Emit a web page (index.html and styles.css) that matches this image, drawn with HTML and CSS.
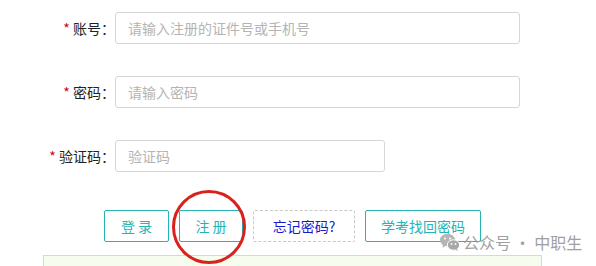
FILE: index.html
```html
<!DOCTYPE html>
<html lang="zh">
<head>
<meta charset="utf-8">
<link rel="stylesheet" href="styles.css">
</head>
<body>
<div class="page">
  <form class="form">
    <div class="row">
      <label class="label"><span class="star">*</span> 账号：</label>
      <input class="input wide" type="text" placeholder="请输入注册的证件号或手机号">
    </div>
    <div class="row">
      <label class="label"><span class="star">*</span> 密码：</label>
      <input class="input wide" type="password" placeholder="请输入密码">
    </div>
    <div class="row">
      <label class="label"><span class="star">*</span> 验证码：</label>
      <input class="input narrow" type="text" placeholder="验证码">
    </div>
    <div class="actions">
      <span class="btn">登 录</span>
      <span class="btn">注 册</span>
      <span class="btn dashed">忘记密码?</span>
      <span class="btn">学考找回密码</span>
    </div>
  </form>
  <div class="notice"></div>
  <div class="circle"></div>
  <div class="watermark">
    <svg class="wx" width="20" height="18" viewBox="0 0 20 18">
      <ellipse cx="7.5" cy="7" rx="7.5" ry="6.3" fill="#b5b5b5"/>
      <path d="M3 12 L2.5 15 L6 12.6 Z" fill="#b5b5b5"/>
      <ellipse cx="13.5" cy="12" rx="6.2" ry="5.2" fill="#a8a8a8" stroke="#fff" stroke-width="1"/>
      <path d="M17 16 L18 18 L15 16.5 Z" fill="#a8a8a8"/>
      <circle cx="5" cy="5.5" r="1" fill="#fff"/>
      <circle cx="10" cy="5.5" r="1" fill="#fff"/>
      <circle cx="11.5" cy="11" r="0.9" fill="#fff"/>
      <circle cx="15.5" cy="11" r="0.9" fill="#fff"/>
    </svg>
    <span>公众号 · 中职生</span>
  </div>
</div>
</body>
</html>
```
FILE: styles.css
```css
html, body {
  margin: 0;
  padding: 0;
  background: #fff;
}
body {
  font-family: "Microsoft YaHei", "Noto Sans CJK SC", sans-serif;
  font-size: 14px;
  color: #333;
}
.page {
  position: relative;
  width: 596px;
  height: 266px;
  overflow: hidden;
}
.form {
  padding-top: 12px;
  margin: 0;
}
.row {
  display: flex;
  align-items: center;
  height: 32px;
  margin-bottom: 32px;
}
.row:nth-child(3) {
  margin-bottom: 38px;
}
.label {
  width: 115px;
  box-sizing: border-box;
  padding-right: 0;
  text-align: right;
  color: #222;
  line-height: 32px;
}
.star {
  color: #d0021b;
}
.input {
  box-sizing: border-box;
  height: 32px;
  border: 1px solid #d6d6d6;
  border-radius: 3px;
  padding: 0 12px;
  font-family: inherit;
  font-size: 14px;
  color: #333;
  outline: none;
  background: #fff;
}
.input::placeholder {
  color: #b4b4b4;
}
.wide {
  width: 405px;
}
.narrow {
  width: 270px;
}
.actions {
  display: flex;
  gap: 10px;
  padding-left: 104px;
}
.btn {
  box-sizing: border-box;
  height: 32px;
  line-height: 30px;
  padding: 0;
  text-align: center;
  border: 1px solid #26b3b3;
  border-radius: 2px;
  color: #26b3b3;
  white-space: nowrap;
}
.actions .btn:nth-child(1) {
  width: 65px;
}
.actions .btn:nth-child(2) {
  width: 64px;
}
.actions .btn:nth-child(3) {
  width: 102px;
}
.actions .btn:nth-child(4) {
  width: 116px;
}
.dashed {
  border: 1px dashed #c8c8c8;
  color: #1a1acc;
}
.notice {
  position: absolute;
  left: 43px;
  top: 255px;
  width: 499px;
  height: 40px;
  box-sizing: border-box;
  border: 1px solid #c9e8ad;
  background: #f6fdee;
}
.circle {
  position: absolute;
  left: 172px;
  top: 190px;
  width: 74px;
  height: 74px;
  box-sizing: border-box;
  border: 3px solid #d8221c;
  border-radius: 50%;
}
.watermark {
  position: absolute;
  left: 440px;
  top: 232px;
  display: flex;
  align-items: center;
  gap: 3px;
  color: #a0a0a0;
  font-size: 16px;
  line-height: 20px;
}
.wx {
  display: block;
}
```
